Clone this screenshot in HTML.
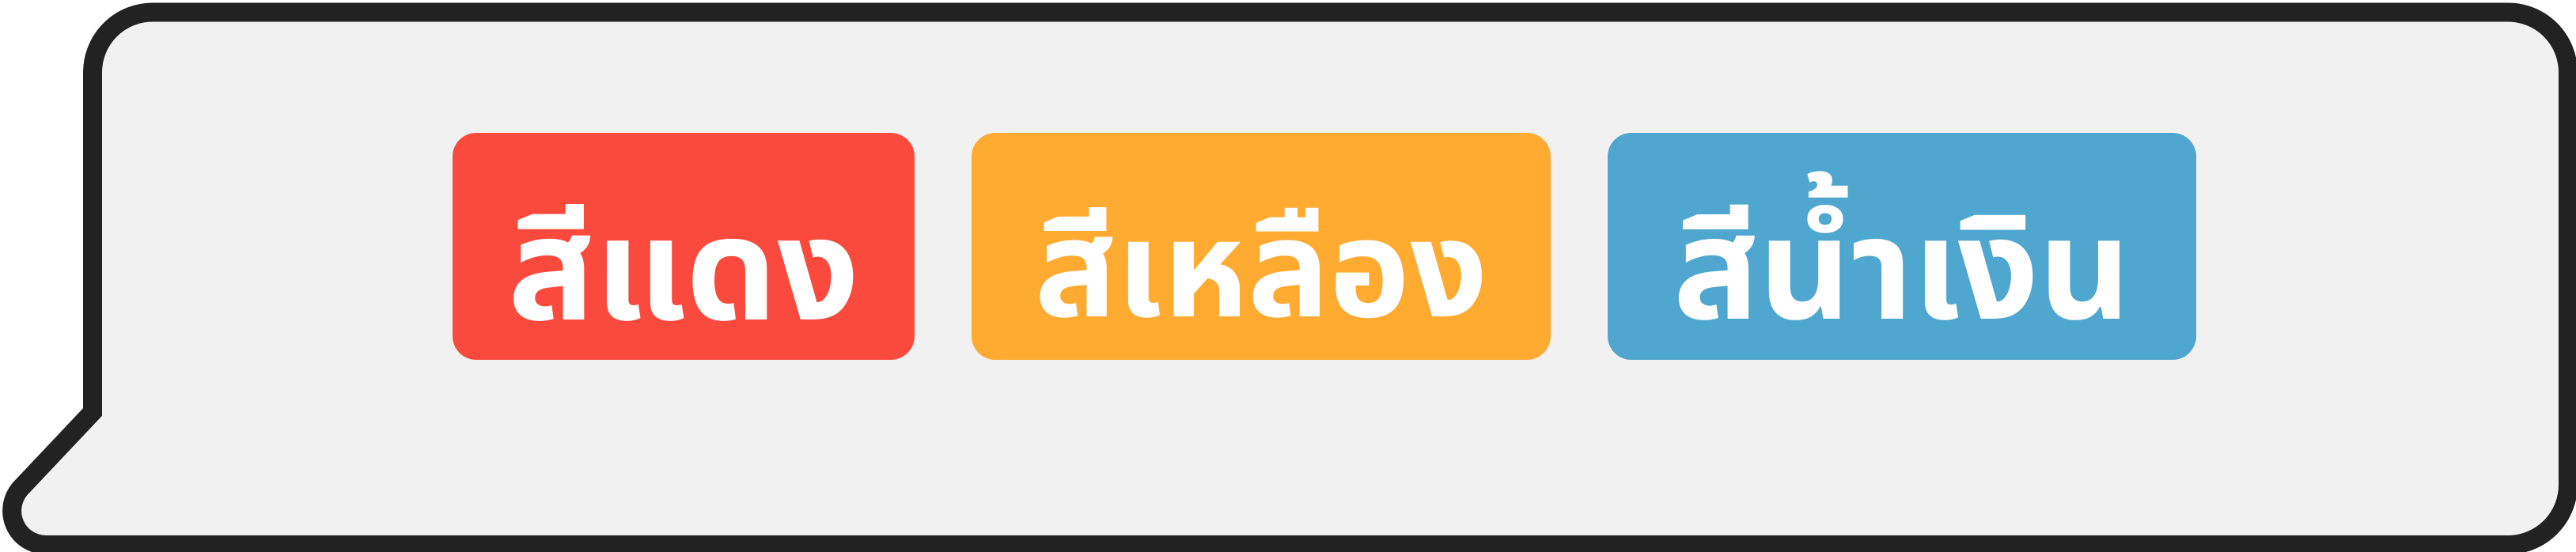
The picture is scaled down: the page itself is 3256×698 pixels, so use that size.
<!DOCTYPE html>
<html><head><meta charset="utf-8"><style>
html,body{margin:0;padding:0;width:3256px;height:698px;overflow:hidden;background:#fff;}
svg{position:absolute;left:0;top:0;}
.b{position:absolute;top:168px;height:287px;border-radius:30px;color:#fff;font-family:"Liberation Sans","Noto Sans Thai","Loma","Garuda","Noto Sans CJK SC",sans-serif;font-weight:bold;line-height:287px;text-align:center;white-space:nowrap;overflow:hidden;}
.b span{position:relative;top:30px;}
</style></head><body>
<svg width="3256" height="698" viewBox="0 0 3256 698">
<path d="M193,15.5 H3170 A76,76 0 0 1 3246,91.5 V613 A76,76 0 0 1 3170,689 H58 A43,43 0 0 1 26.4,617 L117,521 V91.5 A76,76 0 0 1 193,15.5 Z" fill="#f1f1f1" stroke="#222" stroke-width="24"/>
</svg>
<div class="b" style="left:572px;width:584px;background:#fa4a3e;font-size:182px;"><span>สีแดง</span></div>
<div class="b" style="left:1228px;width:732px;background:#ffaa30;font-size:172px;"><span>สีเหลือง</span></div>
<div class="b" style="left:2032px;width:744px;background:#4fa7cf;font-size:180px;"><span>สีน้ำเงิน</span></div>
</body></html>
